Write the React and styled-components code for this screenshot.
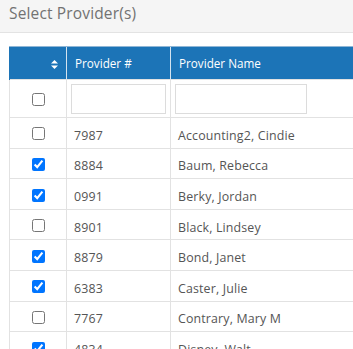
import React from "react";
import styled, { createGlobalStyle } from "styled-components";

const GlobalStyle = createGlobalStyle`
  html, body {
    margin: 0;
    padding: 0;
    background: #fff;
    font-family: "Open Sans", "Liberation Sans", sans-serif;
    overflow: hidden;
  }
`;

const providers = [
  { id: "7987", name: "Accounting2, Cindie", checked: false },
  { id: "8884", name: "Baum, Rebecca", checked: true },
  { id: "0991", name: "Berky, Jordan", checked: true },
  { id: "8901", name: "Black, Lindsey", checked: false },
  { id: "8879", name: "Bond, Janet", checked: true },
  { id: "6383", name: "Caster, Julie", checked: true },
  { id: "7767", name: "Contrary, Mary M", checked: false },
  { id: "4834", name: "Disney, Walt", checked: true },
];

function SortIcon() {
  return (
    <svg width="7" height="9" viewBox="0 0 7 9" aria-hidden="true">
      <path d="M3.5 0 L7 3.6 L0 3.6 Z" fill="#fff" />
      <path d="M0 5.4 L7 5.4 L3.5 9 Z" fill="#fff" />
    </svg>
  );
}

function App() {
  return (
    <>
      <GlobalStyle />
      <Panel>
        <PanelHeader>
          <Title>Select Provider(s)</Title>
        </PanelHeader>
        <Body>
          <Table>
            <colgroup>
              <col style={{ width: 57 }} />
              <col style={{ width: 104 }} />
              <col style={{ width: 200 }} />
            </colgroup>
            <thead>
              <tr>
                <HeadCell $align="right">
                  <SortIcon />
                </HeadCell>
                <HeadCell>Provider #</HeadCell>
                <HeadCell>Provider Name</HeadCell>
              </tr>
            </thead>
            <tbody>
              <FilterRow>
                <CheckCell>
                  <Check type="checkbox" readOnly />
                </CheckCell>
                <FilterCell>
                  <FilterInput $w={95} />
                </FilterCell>
                <FilterCell>
                  <FilterInput $w={132} />
                </FilterCell>
              </FilterRow>
              {providers.map((p) => (
                <Row key={p.id}>
                  <CheckCell>
                    <Check type="checkbox" checked={p.checked} readOnly />
                  </CheckCell>
                  <Cell>{p.id}</Cell>
                  <Cell>{p.name}</Cell>
                </Row>
              ))}
            </tbody>
          </Table>
        </Body>
      </Panel>
    </>
  );
}

export default App;

const Panel = styled.div`
  width: 353px;
  height: 349px;
  overflow: hidden;
`;

const PanelHeader = styled.div`
  height: 33px;
  background: #f5f5f5;
  border-bottom: 1px solid #e3e3e3;
  box-sizing: border-box;
  padding: 2px 0 0 9px;
`;

const Title = styled.h3`
  margin: 0;
  font-size: 15.5px;
  letter-spacing: 0.15px;
  font-weight: 400;
  color: #727272;
  line-height: 22px;
`;

const Body = styled.div`
  padding: 13px 0 0 9px;
`;

const Table = styled.table`
  border-collapse: collapse;
  table-layout: fixed;
  width: 361px;
  font-size: 12.4px;
  color: #555;
`;

const HeadCell = styled.th`
  height: 33px;
  box-sizing: border-box;
  background: #1c74b7;
  color: #fff;
  font-weight: 400;
  font-size: 11.7px;
  text-align: ${(p) => p.$align || "left"};
  padding: 0 8px;
  border-top: 1px solid #8fb6d6;
  border-left: 1px solid #d4e3ef;
  vertical-align: middle;
  &:first-child {
    border-left: 1px solid #1c74b7;
    padding-right: 8px;
  }
  svg {
    display: inline-block;
    vertical-align: middle;
  }
`;

const FilterRow = styled.tr`
  height: 38px;
`;

const Row = styled.tr`
  height: 30.6px;
`;

const Cell = styled.td`
  border: 1px solid #e2e2e2;
  padding: 6px 0 0 7px;
  line-height: 16px;
  letter-spacing: 0.15px;
  white-space: nowrap;
  overflow: hidden;
`;

const CheckCell = styled.td`
  border: 1px solid #e2e2e2;
  text-align: center;
  padding: 0;
  vertical-align: middle;
`;

const FilterCell = styled.td`
  border: 1px solid #e2e2e2;
  padding: 3px 4px 3px 4px;
`;

const FilterInput = styled.input`
  display: block;
  width: ${(p) => p.$w}px;
  height: 30px;
  box-sizing: border-box;
  border: 1px solid #dcdcdc;
  margin: 0;
  padding: 0 6px;
  font: inherit;
`;

const Check = styled.input`
  width: 13px;
  height: 13px;
  margin: 0;
  vertical-align: middle;
`;
